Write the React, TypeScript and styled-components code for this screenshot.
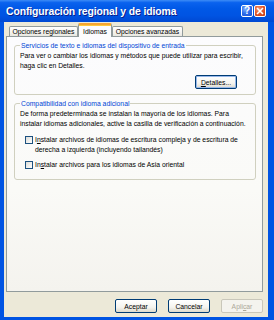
import styled, { createGlobalStyle, css } from 'styled-components'

const GlobalStyle = createGlobalStyle`
  html, body {
    margin: 0;
    padding: 0;
    width: 274px;
    height: 320px;
    overflow: hidden;
    background: #ece9d8;
  }
  * {
    box-sizing: border-box;
  }
`

const Window = styled.div`
  width: 274px;
  height: 320px;
  display: flex;
  flex-direction: column;
  background: #0054e3;
  font-family: "Liberation Sans", Arial, sans-serif;
  font-size: 6.8px;
  color: #000;
`

const TitleBar = styled.div`
  height: 22px;
  flex: none;
  display: flex;
  align-items: center;
  padding: 0 8px 0 6px;
  background: linear-gradient(180deg, #3d8cf6 0%, #0a62ee 12%, #0058e6 40%, #0054e3 70%, #0049d3 100%);
`

const Title = styled.div`
  flex: 1;
  color: #fff;
  font-weight: bold;
  font-size: 10.4px;
  letter-spacing: -0.1px;
  text-shadow: 1px 1px 0 #0a1e8c;
  white-space: nowrap;
`

const TitleButtons = styled.div`
  display: flex;
  gap: 1px;
`

const CaptionButton = styled.div<{ $close?: boolean }>`
  width: 12px;
  height: 12px;
  border: 1px solid #fff;
  border-radius: 2px;
  display: flex;
  align-items: center;
  justify-content: center;
  color: #fff;
  font-weight: bold;
  font-size: 10px;
  line-height: 1;
  ${({ $close }) =>
    $close
      ? css`background: radial-gradient(circle at 35% 30%, #f29a7a 0%, #e55a2d 45%, #c23a12 100%);`
      : css`background: radial-gradient(circle at 35% 30%, #7fb0ff 0%, #2b6bea 50%, #1c4fd0 100%);`}
`

const Body = styled.div`
  flex: 1;
  display: flex;
  flex-direction: column;
  background: #ece9d8;
  margin: 0 6px 3px 4px;
  padding: 1px 5px 0 2px;
`

const TabRow = styled.div`
  display: flex;
  align-items: flex-end;
  height: 13px;
  padding-left: 3px;
  position: relative;
  z-index: 1;
`

const Tab = styled.div<{ $active?: boolean; $width: number }>`
  width: ${({ $width }) => $width}px;
  height: 10px;
  display: flex;
  align-items: center;
  justify-content: center;
  border: 1px solid #919b9c;
  border-bottom: none;
  border-radius: 2px 2px 0 0;
  background: linear-gradient(180deg, #fff 0%, #f4f3ee 60%, #e8e7e0 100%);
  white-space: nowrap;
  ${({ $active }) =>
    $active &&
    css`
      height: 14px;
      margin-bottom: -1px;
      background: #fcfcfe;
      border-top: 2px solid #f5a532;
      box-shadow: inset 0 1px 0 #ffc83c;
    `}
`

const Panel = styled.div`
  height: 256px;
  border: 1px solid #919b9c;
  background: linear-gradient(180deg, #fcfcfe 0%, #fafaf7 60%, #f4f3ee 100%);
  padding: 4px 6px 0 7px;
  display: flex;
  flex-direction: column;
  gap: 4px;
`

const Group = styled.fieldset<{ $bottom?: number }>`
  margin: 0;
  border: 1px solid #d0d0bf;
  border-radius: 3px;
  padding: 0 4px ${({ $bottom }) => $bottom ?? 5}px 5px;
`

const Legend = styled.legend`
  color: #0046d5;
  padding: 0 1px;
  line-height: 9px;
`

const Text = styled.p`
  margin: 1px 0 0;
  line-height: 10px;
  white-space: nowrap;
`

const RightRow = styled.div`
  display: flex;
  justify-content: flex-end;
  margin-top: 4px;
  padding-right: 14px;
`

const Button = styled.button<{ $default?: boolean }>`
  width: 42px;
  height: 14px;
  padding: 0;
  font: inherit;
  color: #000;
  border: 1px solid #003c74;
  border-radius: 2px;
  background: linear-gradient(180deg, #fff 0%, #f5f4ef 60%, #dcd9cc 100%);
  ${({ $default }) =>
    $default &&
    css`
      box-shadow: inset 0 0 0 1px #98b8ea;
    `}
  &:disabled {
    color: #aca899;
    border-color: #c9c7ba;
    background: #f4f3ee;
  }
`

const Key = styled.span`
  text-decoration: underline;
`

const CheckRow = styled.label`
  display: flex;
  align-items: flex-start;
  gap: 2px;
  margin-top: 6px;
  padding-left: 5px;
  line-height: 9.5px;
  white-space: nowrap;
`

const Box = styled.span`
  flex: none;
  width: 8px;
  height: 8px;
  margin-top: 1px;
  border: 1px solid #1c5180;
  background: linear-gradient(135deg, #dcdcd7 0%, #fff 100%);
`

const Footer = styled.div`
  display: flex;
  justify-content: flex-end;
  gap: 11px;
  padding-top: 7px;
`

export default function App() {
  return (
    <>
      <GlobalStyle />
      <Window>
        <TitleBar>
          <Title>Configuración regional y de idioma</Title>
          <TitleButtons>
            <CaptionButton>?</CaptionButton>
            <CaptionButton $close>
              <svg width="8" height="8" viewBox="0 0 8 8">
                <path d="M1 1 L7 7 M7 1 L1 7" stroke="#fff" strokeWidth="1.6" />
              </svg>
            </CaptionButton>
          </TitleButtons>
        </TitleBar>
        <Body>
          <TabRow>
            <Tab $width={69}>Opciones regionales</Tab>
            <Tab $width={34} $active>Idiomas</Tab>
            <Tab $width={71}>Opciones avanzadas</Tab>
          </TabRow>
          <Panel>
            <Group>
              <Legend>Servicios de texto e idiomas del dispositivo de entrada</Legend>
              <Text>
                Para ver o cambiar los idiomas y métodos que puede utilizar para escribir,
                <br />
                haga clic en Detalles.
              </Text>
              <RightRow>
                <Button $default>
                  <Key>D</Key>etalles...
                </Button>
              </RightRow>
            </Group>
            <Group $bottom={9}>
              <Legend>Compatibilidad con idioma adicional</Legend>
              <Text>
                De forma predeterminada se instalan la mayoría de los idiomas. Para
                <br />
                instalar idiomas adicionales, active la casilla de verificación a continuación.
              </Text>
              <CheckRow>
                <Box />
                <span>
                  I<Key>n</Key>stalar archivos de idiomas de escritura compleja y de escritura de
                  <br />
                  derecha a izquierda (incluyendo tailandés)
                </span>
              </CheckRow>
              <CheckRow>
                <Box />
                <span>
                  In<Key>s</Key>talar archivos para los idiomas de Asia oriental
                </span>
              </CheckRow>
            </Group>
          </Panel>
          <Footer>
            <Button>Aceptar</Button>
            <Button>Cancelar</Button>
            <Button disabled>
              Apli<Key>c</Key>ar
            </Button>
          </Footer>
        </Body>
      </Window>
    </>
  )
}
